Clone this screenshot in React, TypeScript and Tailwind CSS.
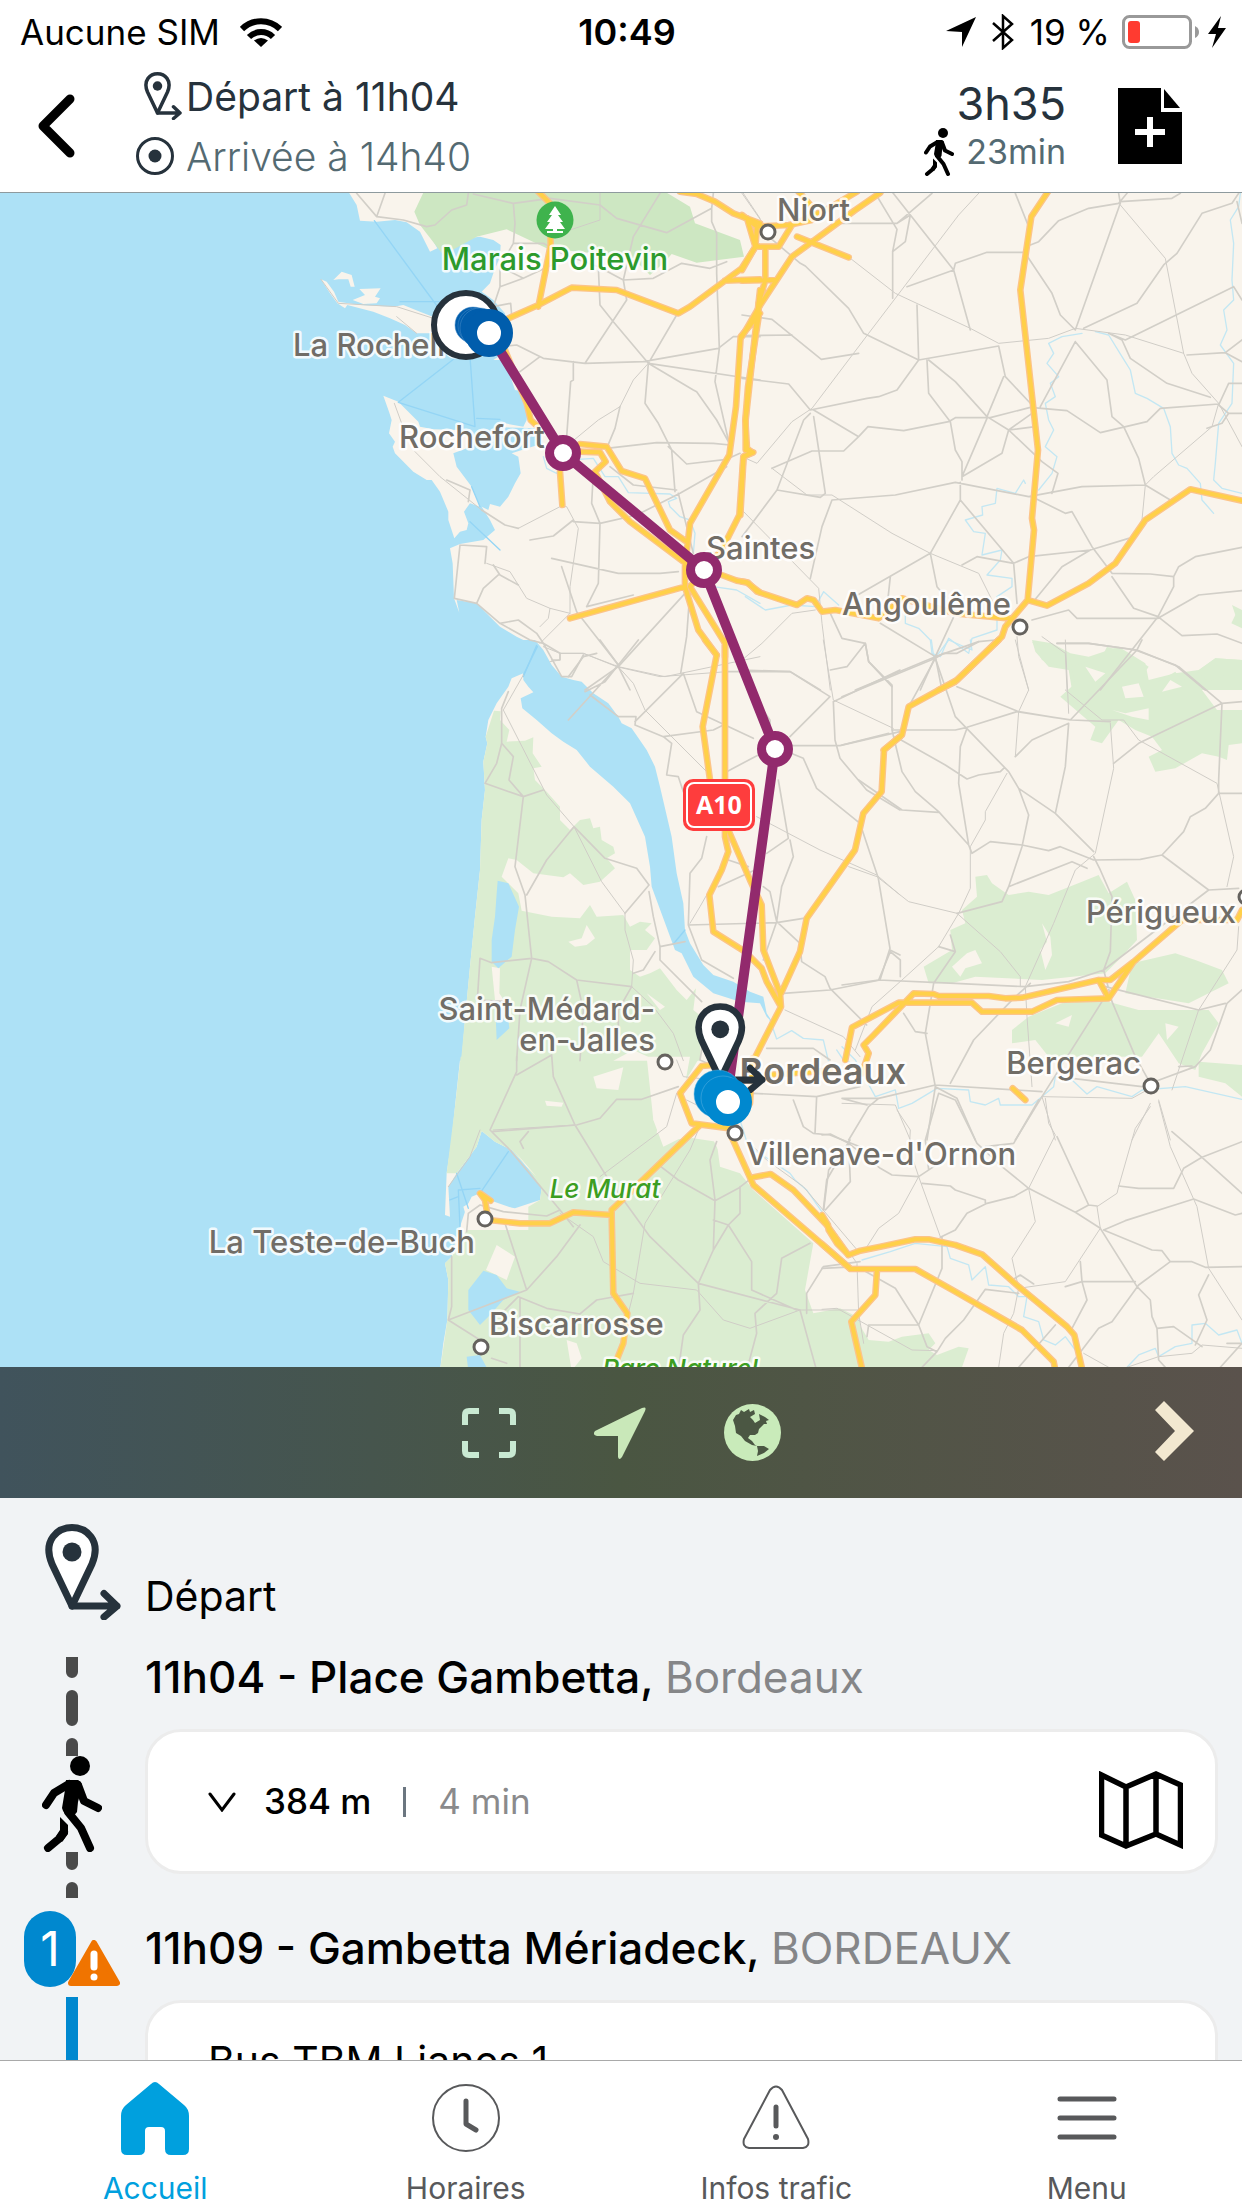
import type { ReactNode } from "react";

/* ---------- Map data: each sheet is drawn at three units per pixel ---------- */

type Sheet = {
  x: number;
  y: number;
  sea?: string;
  land?: string;
  park?: string;
  wood?: string;
  clearing?: string;
  lake?: string;
  road: string;
  lane: string;
  river: string;
  ferry?: string;
  highway: string;
};

const sheets: Sheet[] = [
  {
    x: 780,
    y: 570,
    sea: "M-780 0H262L290 45 300 92 350 95 405 90 440 97 480 125 510 185 532 175 500 120 540 165 580 175 620 145 660 140 700 150 722 165 720 200 700 250 690 280 665 305 700 330 735 370 745 480 700 510 720 510 740 520 755 570 765 600 790 605 805 640 800 690 790 710 735 700 720 712 840 715 850 760 755 790 775 800 782 850 765 880 745 920 720 950 690 942 685 960 665 950 690 990 705 1020 670 1050 600 1062 570 1075 578 1120 582 1225 598 1268 590 1230 650 1240 690 1280 720 1310 770 1340 810 1360 830 1366H-780Z",
    land: "M370 617 415 635 475 695 480 710 520 718 600 720 625 745 620 775 580 790 590 830 635 890 660 950 630 940 612 965 625 1000 620 1020 600 1025 583 1045 565 990 565 965 540 905 515 870 500 870 460 845 405 790 398 770 405 755 387 730 395 690 387 665ZM183 268 200 275 222 305 235 335 300 345 400 350 430 345 480 365 530 385 540 430 470 430 435 405 390 385 340 365 262 345 255 355 232 340 210 310ZM220 270 245 245 275 255 284 290 272 290 265 268 235 268ZM278 330 315 315 298 297 362 295 345 320 360 325 350 340 310 342Z",
    park: "M490 8 1220 8 1290 50 1305 100 1440 150 1452 200 1310 218 1235 192 1215 215 1170 255 1130 215 1000 190 860 175 740 118 650 140 550 195 480 105 463 65Z",
    road: "M290 10 350 80 430 90 500 110 525 105 575 60 620 45 625 10M375 10 350 80M640 12 760 40 870 25 1020 45 1070 85 1220 128 1355 55 1360 10M760 40 765 100 760 160 720 230 720 290 700 350 752 340 755 375M760 160 850 160 915 195 1015 230 1090 270 1180 265 1265 220 1350 235 1400 215M720 230 790 265 720 290M790 265 875 225M1200 10 1120 140 1090 270M1355 55 1355 95 1370 130 1370 250 1378 475 1365 575 1405 750 1410 770M1015 230 1020 345 1060 395 1165 520M1090 270 1100 330 975 520M740 468 770 465 850 505 975 520 1150 515 1375 475 1420 440 1500 440M780 545 840 500M1250 375 1165 520 1300 600 1310 605 1370 690 1405 755M1165 520 1155 640 1195 700 1235 780 1245 905M940 515 940 570 932 575 920 740M1165 520 1500 570M1080 650 1065 715 1040 775 1190 758 1360 760 1410 765M1225 770 1280 822 1400 808 1440 790M1000 850 995 940 1020 1000 1015 1180 980 1250M1050 830 1120 885 1250 900M940 995 1020 1000 1130 975 1260 910 1400 830M1255 910 1300 1090M810 1050 880 1038 940 990M560 870 630 900 625 935M665 960 735 1005 775 1015M600 1065 680 1070 675 1120M600 1065 583 1225 650 1240 720 1300 775 1290 830 1330 850 1360M905 1130 950 1265 1075 1425M875 1105 1075 1150 1200 1150 1255 1145M715 1155 670 1195 650 1240M700 1125 720 1155 775 1185M1275 1210 1075 1430 975 1500M1290 1200 1280 1340 1262 1450M980 1250 1120 1215M850 1360 900 1390 900 1410 875 1410M1075 1430 1110 1500M720 1300 810 1350 850 1360 905 1460 935 1460 970 1395",
    lane: "M183 268 235 340 410 350 520 385M410 380 470 430M403 640 425 700M465 785 540 860 665 960M1020 10 1020 90 900 130M1450 10 1500 85M1165 520 1120 570 1080 650 1015 690 930 760M775 1015 900 950 920 950 955 1015 930 1190 930 1270M680 1120 750 1145 800 1225 870 1255 930 1270 840 1360M870 1255 865 1285 840 1310M900 1390 970 1390 1075 1430 1215 1460 1500 1400",
    river: "M850 800 860 835 890 850 930 810 1000 805 1035 860 1075 860 1105 908 1230 912 1250 925 1225 935 1230 950 1260 980 1290 990 1305 1030 1300 1090M1360 1190 1430 1200 1500 1240",
    ferry: "M343 92 540 360M420 335 540 335M590 500 415 637 645 710 630 500M650 685 720 688M635 890 660 950M630 995 720 1080M830 1366 790 1460",
    highway:
      "M830 0 870 40 872 165 835 350M745 385 835 345 935 293 1070 300 1255 370 1290 350 1445 235 1490 165M1260 5 1310 12 1365 35 1420 70 1500 100M1395 272 1500 268M735 480 800 640 812 690 850 725M960 762 1040 770 1085 843 1155 865 1230 1020 1280 1055M960 785 1020 787 1037 815 1005 845 1050 935 1110 995 1270 1115M900 845 907 945M930 1285 1275 1190M1500 370 1442 440 1428 650 1408 795 1290 1000 1275 1130 1275 1190 1315 1320 1370 1395M1500 300 1470 570 1457 690 1457 780 1480 787 1450 800 1438 975 1385 1080 1290 1190 1395 1360 1395 1400M1385 1155 1430 1172 1460 1177 1500 1207",
  },
  {
    x: 2226,
    y: 570,
    wood: "M870 1350 930 1360 985 1390 1040 1400 1130 1370 1210 1420 1220 1470 1300 1450 1370 1440 1420 1405 1500 1410V1500H990L980 1440 920 1430 880 1385ZM1470 1245 1500 1260V1315L1468 1300 1480 1275Z",
    road: "M400 10 465 118 452 185 452 325M450 5 635 240 685 420M270 100 465 100 570 10M465 100 505 75 490 155 452 185M495 290 635 240 640 220 735 187 845 187M820 10 860 110 850 190 930 310 955 375 1000 420 1135 40 1130 10M865 165 890 155 950 92 1040 55 1130 40 1155 10M1135 35 1290 25 1315 10M1490 10 1470 40 1380 70 1305 190 1265 225 1185 340 1025 415M1500 100 1485 35M1475 290 1150 450 1100 430M1475 290 1500 330M80 140 175 220 190 228 320 355 365 430 530 510 525 345M530 510 770 468 790 560 870 645M0 375 90 388 238 508 350 490M0 437 150 435M0 565 140 582 205 660 375 625 410 620 465 600 530 510M555 510 560 610 625 695 640 780 660 815 660 870M560 510 640 575 735 680 785 560M215 660 350 740 378 710 485 722 620 695 640 683 745 683 865 652 975 662 1075 728 1215 695 1255 655 1430 642M350 740 305 783 210 783 90 835M205 670 185 690 105 900 235 922 250 910 215 680M105 900 0 1040M270 930 460 915 640 877 860 920 1020 890 1210 885 1285 930M270 930 240 1010 205 1165M655 877 655 930 565 1090M655 930 815 1120 825 1240M735 685 660 860 780 790 800 720 870 670M735 680 800 720 900 815 948 850 930 910M800 720 880 710M1000 455 895 650M1000 455 1095 570 1110 680 1145 710 1190 805 1210 885M1100 430 1140 450 1165 505 1275 580 1405 622M1335 495 1450 488 1500 450M1450 488 1500 515M870 920 970 970 990 965 1050 1070 1110 1150 1225 1152 1295 1160 1295 1190 1248 1280M1295 1160 1310 1130 1360 1100 1500 1072M1110 1160 1175 1255 1248 1280 1320 1337 1425 1332 1500 1360M860 1100 1045 1080 1160 1045M870 1240 960 1130 1045 1080M660 1125 705 1100 815 1120 860 1100M330 1225 565 1090 585 1190 610 1220M445 1160 438 1225M870 1290 980 1260 1005 1285 1248 1285 1370 1215 1500 1202M1248 1280 1075 1500M945 1360 1040 1360 1180 1380 1300 1425 1390 1500M265 1270 300 1345 370 1360 380 1415 450 1490M370 1360 315 1430 265 1440M415 1300 580 1400 640 1270M340 1500 580 1400 710 1355 760 1350M580 1400 600 1500M580 1400 535 1500M0 1440 145 1445 235 1500M1460 580 1500 580M1460 580 1430 645 1460 670 1500 670M1460 670 1440 700 1395 715",
    lane: "M0 10 70 110M710 10 650 75 380 430 210 655 150 695 45 820 0 800M1135 45 1270 205 1325 490 1350 550 1430 640 1410 710 1235 860 1210 885 1200 990M325 205 460 310 685 415 770 460 920 445 1000 415 1150 435 1325 490M90 835 195 915 270 915 450 1030 565 1090 710 1150 755 1240M0 960 230 1195 240 1300 265 1500M1430 640 1500 770M825 1340 830 1400 860 1500M900 1340 970 1390 975 1500M0 1410 60 1360 150 1270 220 1260",
    river:
      "M1495 10 1490 50 1465 90 1475 160 1470 270 1475 330 1445 360 1455 420 1435 465 1475 520 1470 640 1430 700 1420 820 1415 870 1440 895 1500 910M1060 425 1100 435 1140 500 1165 540 1180 610 1215 625 1265 655 1285 710 1290 790 1310 825 1335 835 1375 880 1380 930 1415 970M1020 430 960 440 920 460 935 490 915 520 950 560 925 580 940 620 910 640 920 690 935 720 910 770 945 800 930 850 890 900M850 880 845 870 820 910 765 895 760 940 720 950 722 975 670 990 695 1025 730 1030 720 1095 780 1080 775 1110 735 1155 810 1165 810 1190 765 1220 765 1320 690 1345 680 1390 620 1345 595 1400 570 1390 565 1350 530 1315 490 1300 490 1260M10 1220 70 1260 150 1245 220 1250 245 1205 290 1245",
    highway:
      "M0 75 45 110 140 105 210 90M165 0 210 50M345 5 260 55 150 105 110 170 40 170 0 240M45 110 40 170 15 85M70 170 70 270 50 340 50 380 18 590 10 690 15 775 30 787 5 800-5 975M415 8 340 60 150 200 55 345 0 440M165 140 320 202M0 272 100 270M918 5 868 80 835 300 888 780 870 985 876 1020 857 1230 790 1310 780 1340 640 1475 590 1500M857 1230 915 1247 1040 1180 1120 1120 1210 990 1345 898 1500 932M0 1175 18 1178 45 1205 165 1245 195 1225 215 1230 240 1265 280 1260 410 1285 480 1225 550 1245 640 1270 800 1285",
  },
  {
    x: 1200,
    y: 1920,
    sea: "M-1200 0H405L430 30 455 75 485 110 520 120 545 125 580 160 625 190 655 230 665 250 695 265 740 330 765 380 780 440 815 590 830 700 850 790 855 870 870 910 910 975 940 1005 1000 1025 1050 1055 1090 1070 1100 1120 1120 1150 1100 1130 1080 1090 1020 1085 940 1060 880 1010 845 940 825 930 755 740 750 680 735 590 690 490 640 440 570 380 530 330 490 305 455 280 410 240 367 205 362 175 400 157 385 140 370 120V100L335 115 325 140 290 190 265 240 257 290 262 310 250 365 255 450 245 540 240 690 225 830 210 980 195 1140 185 1262H-1200Z",
    wood: "M282 212 302 214 300 240 328 270 320 305 375 302 400 292 398 340 425 380 400 385 405 420 440 455 480 500 480 540 510 570 540 540 570 535 580 565 600 560 605 600 640 620 645 640 620 655 645 685 600 725 550 735 510 700 490 712 400 700 350 660 325 655 305 710 355 760 365 812 455 830 540 835 570 795 590 830 670 825 690 860 720 845 755 850 735 870 765 895 740 930 690 930 690 990 720 1010 750 1000 780 985 830 1050 860 1080 888 1045 880 1110 905 1130 900 1262H183L210 980 225 830 240 690 245 540 255 450 250 365 262 310 257 290Z",
    clearing: "M505 905 545 895 560 855 585 895 560 915 525 920ZM275 980 300 985 298 1060 330 1110 285 1080ZM640 1262 700 1230 770 1262ZM740 1060 795 1100 780 1110Z",
    lake: "M293 722 325 730 357 800 345 870 335 950 295 985 275 965 275 900 285 830 290 760ZM285 1080 320 1090 328 1165 290 1200Z",
    road: "M325 155 305 205V310L340 350 327 420 370 470M305 310 290 370 255 430 370 470 430 450M370 470 345 680 375 765 395 955 360 1110 350 1262M380 765 440 660 522 560 615 655 710 685 747 735 675 820M747 755 760 830 780 920V960L905 1085M780 920 855 905M600 0 655 75 505 240M655 75 715 0M505 110 550 50 590 40M555 155 615 125 655 75M570 165 655 230H708L705 255 790 290 940 270 970 255M790 290 815 310 800 405 835 410 850 455M850 100 890 215 1060 295M850 100 705 245M980 95H1170L1290 170 1170 290M1060 170 1110 240V260M980 395 1075 345M1125 320 1210 355 1250 445 1380 550 1435 715 1470 925 1440 1020 1290 1050 1150 1060M1175 317H1320L1500 275M1300 185 1305 300 1320 355 1400 450 1500 510M1300 185 1500 90M1135 420 1165 595 1100 640M985 660 1045 680M920 590 905 655 870 700 865 855 905 960 1000 1015M865 855 1130 848 1210 835M955 740 1065 690M1130 845 1200 910 1205 965 1275 1010 1290 1045 1400 1155M1170 600 1180 650 1145 740 1130 845 1090 960M1090 740 1110 755 1130 845M240 955 275 968 395 955 445 965 530 1020 695 1040M240 955 232 1080 330 1085M700 1000 730 990 765 935M695 1040 655 1110 655 1180M530 1020 550 1110 540 1262M1470 930 1500 945",
    lane: "M370 105 310 210 440 465 522 560 605 725 675 820 675 870 700 960 695 1040 760 1100 820 1180 850 1262M430 20 480 40 550 40 650 80 780 110 980 95M735 210 700 130 650 75M735 210 920 395M1070 530 1260 630 1430 705 1500 765M1270 0 1300 180 1480 265M870 850 900 800 920 765M1155 1110 1330 1190 1380 1250M480 40V60L450 65",
    river: "M1110 1140 1130 1197 1175 1172 1210 1195 1270 1200 1285 1262",
    ferry: "M412 20 370 105M820 912 855 870",
    highway:
      "M915 0 950 45 908 260 930 420M975 0V590L985 635 965 690 928 765 940 875 1035 935 1085 985 1100 1025 1140 1095M985 570 1050 720 1085 795 1090 930 1140 1060 1143 1100 1060 1262M1500 290 1452 330 1445 455 1390 520 1365 630 1220 835 1200 935 1143 1060",
  },
  {
    x: 2526,
    y: 1920,
    wood: "M570 5 680 50 690 80 780 50 795 20 860 40 920 80 900 110 940 130 1000 95 1020 125 1050 105 1080 150 1125 210 1200 210V310L1160 315 1155 360 1130 350 1080 340 1000 385 940 395 920 350 960 330 930 290 880 270 830 240 780 310 745 300 760 260 655 170 700 130 690 90 600 60ZM1065 95 1120 55 1200 60V120L1150 105 1100 125ZM400 710 435 705 450 730 500 765 560 755 620 765 720 725 770 705 800 760 855 725 880 780 885 900 830 960 790 1000 600 1020 400 1010 330 1030 260 1030 245 980 330 930 325 870 370 850 360 810 405 770ZM870 970 1000 940 1060 960 1140 990 1160 1030 1040 1090 850 1060ZM560 1130 660 1090 780 1080 890 1110 1100 1110 1130 1150 1080 1240 1060 1290 1010 1270 950 1180 900 1250 620 1250 580 1200 510 1210V1170ZM1070 1265 1200 1275V1370L1150 1330 1070 1310Z",
    clearing: "M730 80 790 100 760 125ZM840 140 890 130 905 170 850 175ZM810 210 850 220 920 205 920 240 870 230ZM985 120 1020 140 960 155ZM375 940 400 930 420 970 370 985 355 1010 330 980ZM600 850 625 890 630 945 610 990 595 930 615 905ZM640 1150 690 1125 680 1160ZM970 1150 1010 1160 975 1200Z",
    road: "M0 170 280 55 305 40 345 40 410 5M70 10 80 65 150 135 150 270 200 270H340L375 262 525 215 685 240 885 30 900 0M645 10 740 10 885 30 1010 80 1140 190 890 310 815 370M280 55 340 230 500 395 530 445 640 520 755 635M280 55 200 200M345 140 530 215 635 232 690 240 805 245M375 265 355 320 350 430 380 615 390 640 445 605 540 615 620 632 655 620 755 660 895 658 960 645 1100 750 1190 745M160 290 310 375 375 417 410 405 475 395 485 385M150 270 180 395 220 455 290 515 380 615M50 420 180 510 290 517M520 350 570 300 680 250 670 380 640 520M530 445 560 525 540 620 500 740 690 665 735 685M755 650 775 690 810 770 805 935 785 990M500 740 480 785 345 820M960 645 1025 575 1045 530 1090 505 1130 460H1200M1130 460V420L1140 190 1200 185M0 315 140 280M0 1035 110 1020 340 1030 550 1040 680 1025 785 990 1100 750M110 1020 145 935 175 960V1010M290 920 340 935 275 1030 250 1180 280 1340 255 1500M340 935 325 885M185 1120 220 1175 255 1180M325 1330 395 1200 515 1075 565 1030M785 990 810 1085 880 1250 925 1330 1060 1280 1105 1230 1155 1090 1200 1050M790 1040 1070 1110 1150 1090M780 1085 600 1370 520 1500M1010 1280 1050 1278M690 1315 900 1340M110 1375H0L75 1395M20 1500 80 1400 110 1375 280 1335 600 1355M280 1340 345 1375 400 1500",
    lane: "M520 0 560 150 530 215 520 350M670 150 780 240 845 240 890 300 1125 430 1175 650 1155 740M670 0 680 220M805 250 815 385 760 640 700 690 635 850 550 1040 555 1130 570 1340M495 400 430 515 430 540 385 620V745L350 820 290 920 180 1020 90 1100 40 1230M20 680 105 710 200 785 345 820 475 935 535 1010V1040M1190 860 1185 930 1070 1110 990 1350M0 1390 160 1395 205 1500M600 1370 870 1375 925 1345M600 1370 640 1500M925 1390 870 1500M950 1380 985 1500",
    river:
      "M268 0 275 50 290 40 320 0 390 30 385 0M0 1220 40 1260 100 1370 160 1350 170 1405 210 1390 285 1345 380 1350 385 1385 430 1395 470 1375 475 1395 570 1395 635 1340 640 1310 690 1320 735 1362 765 1340 870 1370 900 1350 1030 1340 1200 1378",
    highway:
      "M470 0 345 120 200 200 180 285 125 330M10 1260 30 1162 170 1088 390 1088 420 1115 570 1115 645 1080 800 1075 875 965 1020 840M60 1300 80 1240 65 1215 95 1185 215 1060 275 1062 290 1068 440 1068 490 1075 540 1073 770 1020 805 1020 875 965M770 1020 800 1075M1020 840 1185 840 1200 810M512 1345 550 1380",
  },
  {
    x: 1200,
    y: 2880,
    sea: "M-1200 290H181L165 440 155 540 140 640 135 765 150 770 145 680 170 640 230 560 245 513 285 545 335 570 380 620 410 650 425 685 420 720 345 745 290 735 280 725 240 700 215 710 200 740 180 800 165 850 155 890 135 910 145 960 142 1080 130 1150 120 1232H-1200Z",
    wood: "M182 290 H900L870 340 830 400 780 420 760 480 790 560 850 530 950 545 960 620 1020 640 1060 690 1240 850 1215 990 1240 1060 1320 1045 1380 1075V1232H120L142 1080 145 960 135 910 155 890 200 810H385L385 740 420 720 425 685 380 620 335 570 285 545 245 513 230 560 170 640 140 640 165 440Z",
    clearing: "M580 350 670 322 655 390 590 385ZM435 422 490 428 485 440 440 437ZM290 855 345 890 320 960 258 930ZM740 290 870 290 850 400 780 440 770 520 850 540 940 520 1000 480 1050 500 1040 640 980 620 940 540 830 520 760 480ZM500 1140 530 1150 545 1195 515 1232ZM345 575 410 650 380 620ZM190 740 240 710 380 760 370 790 210 810Z",
    lake: "M250 932 290 945 320 985 360 995 310 1020 265 1070 240 1095 205 1050 205 990ZM200 1190 240 1185 265 1232H205Z",
    road: "M350 290V335L270 510 330 570 480 750 520 800M455 285 460 350 525 495 620 650 750 830 895 970 1200 1050 1230 1160 1250 1232M455 285 350 345M275 515 530 495 600 475 650 418H725L835 380M370 565 360 545 385 515M200 815 205 760 240 735 310 755 440 768 480 750M315 790 380 990 145 1080M155 890V1040L145 1080 240 1140M380 990 470 890 540 795M315 1050 355 1010 440 1045 540 1062 590 1020 700 1000M360 1015V1232M895 970 900 1050 850 1125 835 1232M895 970 940 870 945 720 930 600 950 545M770 610 835 660 945 722 1015 685 1060 650M940 780 985 795 1055 905V990L1190 1050M985 795 1020 760V680M940 870 985 795M945 1120M1230 850 1145 895 1130 1000 1065 1060 1070 1120 1040 1232M1380 905 1270 920 1220 1000V1060M275 1195 320 1210M910 240 900 300 945 320M1100 265 1240 265 1290 300M1180 420 1210 500 1240 520 1290 525 1380 560M1250 410 1245 520M1060 345 1110 350M1350 540 1280 660 1270 750M1060 400 1250 410 1380 380",
    lane: "M145 680 210 590 240 510M280 510 525 495M600 650 800 500 830 400M480 760 580 830 610 905 720 970 890 990 970 1080 1050 1105 1200 1050 1380 1050M895 510 870 570 735 790 700 1000 680 1080M1060 560 1100 600 1210 680 1380 880M830 300 850 350 940 360M860 420 940 460",
    river: "M1020 480 1045 560 1110 600 1170 640 1185 660 1220 690 1290 790M1310 270 1330 300 1380 320",
    ferry: "M325 575 240 700M170 640 205 745M175 690 240 685M175 690 180 800M150 720 175 710",
    highway:
      "M945 315 905 318 840 400 875 490 990 505 1050 430 1058 295M900 495 635 750 635 765 520 757 450 790 360 790 265 780 255 720 240 700 272 722M635 765 640 1000 682 1060 670 1150 650 1200M990 520 1060 675 1350 925M1060 652 1112 642 1180 690 1280 795 1345 885M1100 345 1290 332",
  },
  {
    x: 2466,
    y: 3240,
    wood: "M0 700 25 690 110 730 140 780 200 785 240 770 320 760 340 790 320 810 345 825 410 800 440 805 420 862H0Z",
    road: "M0 165 25 162 80 190 175 265 210 285 290 290 350 250M80 190 20 270 5 390M80 190 85 305 10 390M350 40 310 180 320 270M350 40 400 60 465 190 540 260 620 325 575 350 495 370 435 400 400 450 355 472M620 325 760 397 835 445 945 620 985 660 990 710 1005 745 1010 840 1030 862M300 310 385 318 400 330 490 360V372M705 170 800 375 760 397M800 375 825 378M890 318 950 325H1055L1085 265 1140 232 1260 185M1050 155 1140 232 1260 340M845 450 910 422 1115 357 1240 405 1260 400M845 450 990 510 1020 512 1045 545 1110 545 1150 562 1260 560M1045 545 950 615 870 725 830 745 740 862M775 545 780 605 795 660 750 745M730 620 780 605H940M360 470V565L290 735 315 800 345 815M135 770 140 735H290L220 625 105 560M105 560 0 565M300 862 345 815 370 775 425 720 490 628 590 640M590 862 700 735M1005 745 1055 740 1140 800M1120 795 1155 720 1130 645 1160 585M1195 862 1260 790 1215 790M490 200 575 190 650 60M570 600 595 585 635 612",
    lane: "M225 90 265 150 262 205 290 290 230 400 170 445 135 500M290 290 355 470M670 55 680 130 700 165 620 325 640 425 570 535 590 625 575 700 545 760 530 862M985 80 940 145 890 320 885 340 825 380 835 445 730 605 590 625M1010 65 1045 200 1125 380 1160 565 1260 720M0 688 45 685 270 810 345 812M0 400 105 550 110 700 125 790M915 862 1010 830 1110 820 1140 795 1260 805M785 820 860 862",
    river:
      "M120 540 205 515 250 500 280 490 375 500 385 535 440 555 450 600 490 560 500 615 560 620 590 650 615 650 605 710 650 725 665 780 700 795 730 770 760 810M915 862 950 825 1000 805 1010 830 1060 800 1110 790 1110 735 1150 730 1190 765 1245 750 1260 790",
    highway:
      "M0 405 18 435 20 450 45 490 80 525 115 512 175 500 280 478 320 478 400 495 480 523 590 620 735 740 757 765 780 865M0 492 85 567 280 567 400 635 600 750 695 845 700 870M165 570 160 645 88 725 120 865",
  },
];

function Layer({ pick }: { pick: (s: Sheet) => string | undefined }) {
  return (
    <>
      {sheets.map((s, i) => {
        const d = pick(s);
        return d ? <path key={i} d={d} transform={`translate(${s.x} ${s.y})`} /> : null;
      })}
    </>
  );
}

const towns: { name: string; x: number; y: number; end?: boolean }[] = [
  { name: "Niort", x: 777, y: 221 },
  { name: "La Rochelle", x: 293, y: 356 },
  { name: "Rochefort", x: 399, y: 448 },
  { name: "Saintes", x: 706, y: 559 },
  { name: "Angoulême", x: 1011, y: 615, end: true },
  { name: "Saint-Médard-", x: 655, y: 1020, end: true },
  { name: "en-Jalles", x: 655, y: 1051, end: true },
  { name: "Périgueux", x: 1236, y: 923, end: true },
  { name: "Bergerac", x: 1141, y: 1074, end: true },
  { name: "Villenave-d'Ornon", x: 746, y: 1165 },
  { name: "La Teste-de-Buch", x: 475, y: 1253, end: true },
  { name: "Biscarrosse", x: 489, y: 1335 },
];

const dots = [
  [768, 232],
  [1020, 627],
  [665, 1062],
  [735, 1133],
  [485, 1219],
  [481, 1347],
  [1151, 1086],
  [1246, 897],
];

const stops = [
  [563, 453],
  [704, 570],
  [775, 749],
];

function PinShape({ stroke = 6 }: { stroke?: number }) {
  return (
    <g stroke="#26323c" strokeWidth={stroke} strokeLinecap="round" strokeLinejoin="round" fill="none">
      <path d="M27 82 7 40C-3 16 13 3.500 27 3.500S57 16 47 40Z" fill="#fff" />
      <path d="M27 82H72M59 69.500 72 82 59 93" />
      <circle cx="27" cy="28" r="9.500" fill="#26323c" stroke="none" />
    </g>
  );
}

function MapView() {
  return (
    <svg
      role="img"
      aria-label="Carte de l'itinéraire de Bordeaux à La Rochelle"
      viewBox="0 193 1242 1174"
      preserveAspectRatio="xMidYMid slice"
      className="block min-h-0 w-full flex-1 bg-[#f9f4ec] font-[Inter,sans-serif]"
    >
      <g transform="scale(0.33333)">
        <g fill="#ade1f6"><Layer pick={(s) => s.sea} /></g>
        <g fill="#f9f4ec"><Layer pick={(s) => s.land} /></g>
        <g fill="#cde7c2"><Layer pick={(s) => s.park} /></g>
        <g fill="#dbedd1"><Layer pick={(s) => s.wood} /></g>
        <g fill="#f9f4ec"><Layer pick={(s) => s.clearing} /></g>
        <g fill="#ade1f6"><Layer pick={(s) => s.lake} /></g>
        <g fill="none" strokeLinejoin="round" strokeLinecap="round">
          <g stroke="#94d5f5" strokeWidth="4"><Layer pick={(s) => s.ferry} /></g>
          <g stroke="#c3e7f3" strokeWidth="4"><Layer pick={(s) => s.river} /></g>
          <g stroke="#d0cdc7" strokeWidth="3"><Layer pick={(s) => s.lane} /></g>
          <g stroke="#d2cfc8" strokeWidth="5"><Layer pick={(s) => s.road} /></g>
          <g stroke="#fcc488" strokeWidth="20"><Layer pick={(s) => s.highway} /></g>
          <g stroke="#ffd049" strokeWidth="12"><Layer pick={(s) => s.highway} /></g>
        </g>
      </g>

      <g stroke="#65625e" strokeWidth="3" fill="#fff">
        {dots.map(([cx, cy]) => (
          <circle key={cx} cx={cx} cy={cy} r="7" />
        ))}
      </g>

      <g className="text-[31px] font-medium" fill="#716d67" stroke="#fff" strokeOpacity="0.85" strokeWidth="5" strokeLinejoin="round" paintOrder="stroke">
        {towns.map((t) => (
          <text key={t.name} x={t.x} y={t.y} textAnchor={t.end ? "end" : "start"}>
            {t.name}
          </text>
        ))}
        <text x="906" y="1084" textAnchor="end" className="text-[36px] font-semibold">Bordeaux</text>
        <text x="555" y="270" textAnchor="middle" fill="#2c9a2c">Marais Poitevin</text>
        <g className="text-[26px] italic" fill="#3c9e22" textAnchor="middle">
          <text x="605" y="1198">Le Murat</text>
          <text x="680" y="1378">Parc Naturel</text>
        </g>
      </g>

      <circle cx="555" cy="220" r="18.500" fill="#3fb34d" />
      <path d="M555 206 549 215H552L547 222H550L545 229H553V231H547V233H563V231H557V229H565L560 222H563L558 215H561Z" fill="#fff" />

      <path d="M489 333 563 453 704 570 775 749 728 1090" fill="none" stroke="#922a6d" strokeWidth="10" strokeLinejoin="round" />
      <g fill="#fff" stroke="#922a6d" strokeWidth="9">
        {stops.map(([cx, cy]) => (
          <circle key={cx} cx={cx} cy={cy} r="13.500" />
        ))}
      </g>

      <rect x="683" y="779" width="72" height="52" rx="10" fill="#fe3d3d" />
      <rect x="687" y="783" width="64" height="44" rx="7" fill="none" stroke="#fff" strokeWidth="2" />
      <text x="719" y="814" textAnchor="middle" fill="#fff" className="font-['Open_Sans',sans-serif] text-[25px] font-bold">A10</text>

      <circle cx="466" cy="325" r="32" fill="#fff" stroke="#26323c" strokeWidth="6" />
      <g fill="#005dac" stroke="#4b8fc9" strokeWidth="0.500">
        <circle cx="473" cy="325" r="18" />
        <circle cx="476" cy="326" r="18" />
        <circle cx="480" cy="328" r="20" />
      </g>
      <circle cx="489" cy="333" r="18" fill="#fff" stroke="#005dac" strokeWidth="12" />

      <svg x="695" y="1003" width="71" height="90" viewBox="0 0 76 96">
        <PinShape stroke={7} />
      </svg>
      <g fill="#0088cf" stroke="#5db3e2" strokeWidth="0.500">
        <circle cx="718" cy="1094" r="24" />
        <circle cx="723" cy="1098" r="22" />
      </g>
      <circle cx="728" cy="1102" r="18" fill="#fff" stroke="#0088cf" strokeWidth="12" />
    </svg>
  );
}

/* ------------------------------ Shared drawings ------------------------------ */

function Walker({ className }: { className: string }) {
  return (
    <svg viewBox="0 0 60 96" className={className} aria-hidden="true">
      <circle cx="38" cy="10" r="10" />
      <path d="M24 24H36Q40 26 40 30L36 46 35 56 30 62Q21 58 20 52L23 34Z" />
      <g fill="none" stroke="#000" strokeWidth="8" strokeLinecap="round" strokeLinejoin="round">
        <path d="M27 28 12 37 4 49" />
        <path d="M36 29 42 45 56 52" />
        <path d="M26 56 39 72 48 92" />
        <path d="M22 76 18 82 6 92" />
      </g>
      <path d="M18 61 26 69 26 78 20 86 14 80 18 74Z" />
    </svg>
  );
}

function DeparturePin({ className, stroke }: { className: string; stroke: number }) {
  return (
    <svg viewBox="0 0 76 96" className={className} aria-hidden="true">
      <PinShape stroke={stroke} />
    </svg>
  );
}

/* -------------------------------- Page parts -------------------------------- */

function StatusBar() {
  return (
    <div className="grid h-16 grid-cols-3 items-center pr-2 pl-5 text-[35px] leading-none">
      <div className="flex items-center gap-5">
        <span>Aucune SIM</span>
        <svg viewBox="0 0 42 30" className="h-[30px] w-[42px]" aria-label="Wi-Fi">
          <g fill="none" stroke="#000" strokeWidth="6">
            <path d="M2 12A27 27 0 0 1 40 12" />
            <path d="M9 20A17 17 0 0 1 33 20" />
          </g>
          <path d="M21 30 14 23.500Q21 18.500 28 23.500Z" />
        </svg>
      </div>
      <span className="text-center text-[36px] font-semibold">10:49</span>
      <div className="mr-2 flex items-center justify-end">
        <svg viewBox="0 0 30 30" className="mr-4 size-[30px]" aria-label="Localisation">
          <path d="M30 0 16 30V15L0 14Z" />
        </svg>
        <svg viewBox="0 0 22 36" className="mr-4 h-9 w-[22px]" fill="none" stroke="#000" strokeWidth="2.500" aria-label="Bluetooth">
          <path d="M1 9 20 26 11 34V2L20 10 1 27" />
        </svg>
        <span className="mr-3">19 %</span>
        <svg viewBox="0 0 78 34" className="mr-2 h-[34px] w-[78px]" aria-label="Batterie">
          <rect x="1.500" y="1.500" width="67" height="31" rx="6" fill="none" stroke="#999" strokeWidth="3" />
          <rect x="6" y="6" width="12" height="22" rx="3" fill="#ff3b30" />
          <path d="M73 11Q77 13 77 17T73 23Z" fill="#999" />
        </svg>
        <svg viewBox="0 0 18 32" className="h-8 w-[18px]" aria-label="En charge">
          <path d="M13 0 0 18H8L4 32 18 12H10Z" />
        </svg>
      </div>
    </div>
  );
}

function Header() {
  return (
    <header className="flex h-32 items-center pr-15 pb-1 pl-8">
      <button type="button" aria-label="Retour" className="flex w-26 shrink-0 items-center">
        <svg viewBox="0 0 50 70" className="h-[70px] w-[50px]" fill="none" stroke="#000" strokeWidth="9" strokeLinecap="round" strokeLinejoin="round">
          <path d="M38 8 11 35 38 62" />
        </svg>
      </button>
      <div className="flex flex-1 flex-col">
        <div className="flex h-15 items-center gap-1">
          <DeparturePin className="ml-2 h-12 w-[38px]" stroke={7} />
          <span className="text-[39px] leading-none text-[#26323c]">Départ à 11h04</span>
        </div>
        <div className="flex h-15 items-center gap-3">
          <svg viewBox="0 0 38 38" className="size-[38px]" aria-hidden="true">
            <circle cx="19" cy="19" r="17.500" fill="none" stroke="#26323c" strokeWidth="3" />
            <circle cx="19" cy="19" r="6.500" fill="#26323c" />
          </svg>
          <span className="text-[39px] leading-none font-light text-[#546a72]">Arrivée à 14h40</span>
        </div>
      </div>
      <div className="mr-13 flex flex-col items-end pt-1">
        <span className="text-[45px] leading-12 text-[#26323c]">3h35</span>
        <div className="flex items-end gap-3">
          <Walker className="h-12 w-[30px]" />
          <span className="text-[34px] leading-12 text-[#546a72]">23min</span>
        </div>
      </div>
      <button type="button" aria-label="Ajouter aux favoris">
        <svg viewBox="0 0 64 76" className="h-[76px] w-16">
          <path d="M0 0H43V24H64V76H0Z" />
          <path d="M46 1 62 20H46Z" />
          <path d="M17 44H47M32 29V59" stroke="#fff" strokeWidth="6" />
        </svg>
      </button>
    </header>
  );
}

function MapBar() {
  return (
    <div className="relative flex h-[131px] shrink-0 items-center justify-center bg-linear-to-r from-[#40535c] via-[#4a5642] via-50% to-[#5a524c]">
      <div className="flex items-center gap-[78px]">
        <button type="button" aria-label="Plein écran">
          <svg viewBox="0 0 54 50" className="h-[50px] w-[54px]" fill="none" stroke="#c8e9d2" strokeWidth="6">
            <path d="M3 17V7Q3 3 7 3H17M37 3H47Q51 3 51 7V17M51 33V43Q51 47 47 47H37M17 47H7Q3 47 3 43V33" />
          </svg>
        </button>
        <button type="button" aria-label="Ma position">
          <svg viewBox="0 0 52 52" className="size-[52px]" fill="#c9e8b9">
            <path d="M48 1Q53-1 51 4L28 50Q25 54 24 50V29H3Q-2 28 1 24Z" />
          </svg>
        </button>
        <button type="button" aria-label="Type de carte">
          <svg viewBox="0 0 57 57" className="size-[57px]">
            <circle cx="28.500" cy="28.500" r="28.500" fill="#c9ebba" />
            <path
              fill="#4b5743"
              d="M9 16 12 11 15 10 17 6 20 8 25 5 26 8 30 6 31 10 26 13 29 16 31 19 36 16 35 10 41 13 45 16 42 17 43 20 40 20 35 25 34 29 31 31 26 31 24 34 28 37 31 41 33 42 28 41 21 37 17 32 12 29 11 22ZM33 42 40 42 45 45 40 49 33 52 34 47Z"
            />
          </svg>
        </button>
      </div>
      <button type="button" aria-label="Suivant" className="absolute right-12 pb-1">
        <svg viewBox="0 0 39 60" className="h-15 w-[39px]" fill="#f2e8d0">
          <path d="M0 9 9 0 39 30 9 60 0 51 20 30Z" />
        </svg>
      </button>
    </div>
  );
}

function Card({ children }: { children: ReactNode }) {
  return (
    <div className="flex h-[145px] items-center rounded-[36px] border-3 border-[#ececec] bg-white pr-8 pl-15">{children}</div>
  );
}

function Row({ rail, children }: { rail: ReactNode; children: ReactNode }) {
  return (
    <li className="grid grid-cols-[145px_1fr]">
      <div className="flex flex-col">{rail}</div>
      <div className="pr-6">{children}</div>
    </li>
  );
}

function Steps() {
  return (
    <ol className="h-[562px] shrink-0 overflow-hidden bg-[#f1f3f5]">
      <Row rail={<DeparturePin className="mt-[26px] ml-[45px] h-24 w-[76px]" stroke={7} />}>
        <p className="pt-[74px] text-[41px] leading-12">Départ</p>
      </Row>
      <Row
        rail={
          <>
            <svg viewBox="0 0 12 99" className="mt-[37px] ml-[66px] h-[99px] w-3" fill="#4a4a4a" aria-hidden="true">
              <path d="M0 0H12V15A6 6 0 0 1 0 15ZM0 39A6 6 0 0 1 12 39V63A6 6 0 0 1 0 63ZM0 87A6 6 0 0 1 12 87V99H0Z" />
            </svg>
            <Walker className="ml-[42px] h-24 w-15" />
            <svg viewBox="0 0 12 46" className="ml-[66px] h-[46px] w-3" fill="#4a4a4a" aria-hidden="true">
              <path d="M0 0H12V12A6 6 0 0 1 0 12ZM0 36A6 6 0 0 1 12 36V46H0Z" />
            </svg>
          </>
        }
      >
        <h2 className="pt-8 text-[44px] leading-[50px] font-medium">
          11h04 - Place Gambetta, <span className="font-normal text-[#858688]">Bordeaux</span>
        </h2>
        <div className="pt-[27px]">
          <Card>
            <button type="button" className="flex flex-1 items-center text-[35px] leading-none">
              <svg viewBox="0 0 28 20" className="h-5 w-7" fill="none" stroke="#000" strokeWidth="3" strokeLinecap="round" aria-hidden="true">
                <path d="M2 2 14 18 26 2" />
              </svg>
              <span className="ml-7 font-medium">384 m</span>
              <span className="mx-8 h-[30px] w-[3px] bg-[#6b7680]" />
              <span className="text-[#8a8a8c]">4 min</span>
            </button>
            <button type="button" aria-label="Voir sur la carte" className="pt-4">
              <svg viewBox="0 0 84 78" className="h-[78px] w-21" fill="none" stroke="#000" strokeWidth="5.500">
                <path d="M2.500 4 27 16 57 3 81.500 14V74L57 63 27 75 2.500 64ZM27 16V75M57 3V63" />
              </svg>
            </button>
          </Card>
        </div>
      </Row>
      <Row
        rail={
          <>
            <div className="mt-[13px] ml-6 flex h-[76px] items-end">
              <span className="flex h-[76px] w-[52px] items-center justify-center rounded-full bg-[#0088cf] text-[48px] leading-none text-white">
                1
              </span>
              <svg viewBox="0 0 52 47" className="-ml-2 h-[47px] w-[52px]" aria-label="Perturbation">
                <path d="M26 3 49 43H3Z" fill="#f07400" stroke="#f07400" strokeWidth="6" strokeLinejoin="round" />
                <path d="M26 14V27" stroke="#fff" strokeWidth="7" strokeLinecap="round" />
                <circle cx="26" cy="37" r="3.500" fill="#fff" />
              </svg>
            </div>
            <div className="mt-[10px] ml-[66px] w-3 flex-1 bg-[#0088cf]" />
          </>
        }
      >
        <h2 className="pt-[25px] text-[44px] leading-[50px] font-medium">
          11h09 - Gambetta Mériadeck, <span className="font-normal text-[#858688]">BORDEAUX</span>
        </h2>
        <div className="pt-[27px]">
          <Card>
            <span className="mt-[34px] self-start text-[41px] leading-12">Bus TBM Lianes 1</span>
          </Card>
        </div>
      </Row>
    </ol>
  );
}

function Tab({ label, active, children }: { label: string; active?: boolean; children: ReactNode }) {
  return (
    <a
      href="#"
      aria-current={active ? "page" : undefined}
      className={`flex flex-1 flex-col items-center justify-end ${active ? "text-[#00a0de]" : "text-[#58595b]"}`}
    >
      <svg viewBox="0 0 74 74" className="size-[74px]" fill="none" stroke="currentColor" aria-hidden="true">
        {children}
      </svg>
      <span className="mt-3 text-[30px] leading-10">{label}</span>
    </a>
  );
}

function TabBar() {
  return (
    <nav className="flex h-[148px] shrink-0 border-t border-[#a9a9a9] bg-white">
      <Tab label="Accueil" active>
        <path
          fill="currentColor"
          stroke="none"
          d="M33 2Q37-2 41 2L66 23Q71 27 71 34V67Q71 73 65 73H53Q47 73 47 67V49Q47 45 43 45H31Q27 45 27 49V67Q27 73 21 73H9Q3 73 3 67V34Q3 27 8 23Z"
        />
      </Tab>
      <Tab label="Horaires">
        <circle cx="37" cy="36" r="33" strokeWidth="2" />
        <path d="M37 19V42L47 48" strokeWidth="5" strokeLinecap="round" strokeLinejoin="round" />
      </Tab>
      <Tab label="Infos trafic">
        <path d="M31 8Q37 1 43 8L69 57Q71 65 64 66H10Q3 65 5 57Z" strokeWidth="2" strokeLinejoin="round" />
        <path d="M37 25V44" strokeWidth="5" strokeLinecap="round" />
        <circle cx="37" cy="55" r="3" fill="currentColor" stroke="none" />
      </Tab>
      <Tab label="Menu">
        <path d="M10 17H64M10 36H64M10 55H64" strokeWidth="5" strokeLinecap="round" />
      </Tab>
    </nav>
  );
}

export default function App() {
  return (
    <div className="flex h-screen flex-col overflow-hidden bg-white font-[Inter,'Liberation_Sans',sans-serif] text-black">
      <div className="shrink-0 border-b border-[#8e9a9e]">
        <StatusBar />
        <Header />
      </div>
      <MapView />
      <MapBar />
      <Steps />
      <TabBar />
    </div>
  );
}
